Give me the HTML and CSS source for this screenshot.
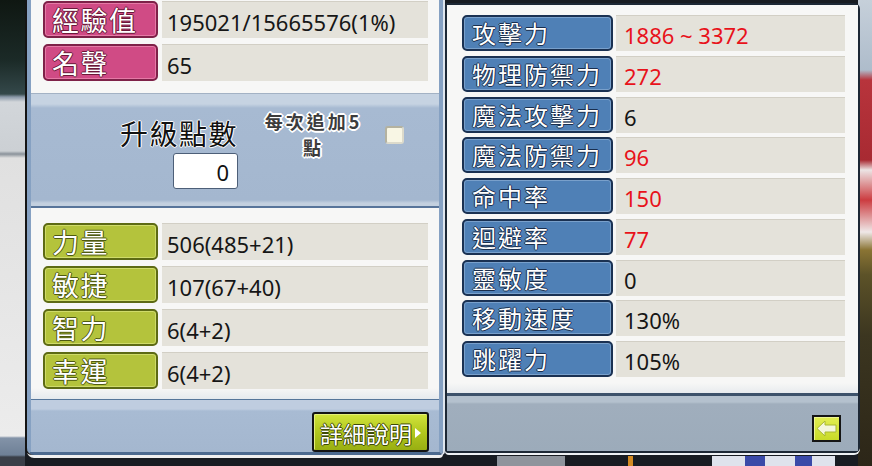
FILE: index.html
```html
<!DOCTYPE html>
<html lang="zh-Hant">
<head>
    <meta charset="UTF-8" />
    <title>角色能力值</title>
    <link rel="stylesheet" href="styles.css">
</head>
<body>
<!-- 能力值視窗 -->
<div class="window">

    <!-- 左側：基本能力 -->
    <section class="panel panel-left">
        <div class="sheet sheet-top">
            <div class="row"><div class="tag tag-pink">經驗值</div><div class="val">195021/15665576(1%)</div></div>
            <div class="row"><div class="tag tag-pink">名聲</div><div class="val">65</div></div>
        </div>

        <div class="ap-bar">
            <div class="ap-box">
                <div class="ap-title">升級點數</div>
                <div class="ap-input">0</div>
            </div>
            <div class="ap-auto">
                <div class="ap-line">每次追加5</div>
                <div class="ap-line">點</div>
            </div>
            <div class="check"></div>
        </div>

        <div class="sheet sheet-stats">
            <div class="row"><div class="tag tag-green">力量</div><div class="val">506(485+21)</div></div>
            <div class="row"><div class="tag tag-green">敏捷</div><div class="val">107(67+40)</div></div>
            <div class="row"><div class="tag tag-green">智力</div><div class="val">6(4+2)</div></div>
            <div class="row"><div class="tag tag-green">幸運</div><div class="val">6(4+2)</div></div>
        </div>

        <div class="foot">
            <button class="detail-btn">詳細說明<span class="tri"></span></button>
        </div>
    </section>

    <!-- 右側：詳細能力 -->
    <section class="panel panel-right">
        <div class="sheet sheet-detail">
            <div class="row"><div class="tag tag-blue">攻擊力</div><div class="val red">1886 ~ 3372</div></div>
            <div class="row"><div class="tag tag-blue">物理防禦力</div><div class="val red">272</div></div>
            <div class="row"><div class="tag tag-blue">魔法攻擊力</div><div class="val">6</div></div>
            <div class="row"><div class="tag tag-blue">魔法防禦力</div><div class="val red">96</div></div>
            <div class="row"><div class="tag tag-blue">命中率</div><div class="val red">150</div></div>
            <div class="row"><div class="tag tag-blue">迴避率</div><div class="val red">77</div></div>
            <div class="row"><div class="tag tag-blue">靈敏度</div><div class="val">0</div></div>
            <div class="row"><div class="tag tag-blue">移動速度</div><div class="val">130%</div></div>
            <div class="row"><div class="tag tag-blue">跳躍力</div><div class="val">105%</div></div>
        </div>
        <div class="foot foot-gray">
            <button class="back-btn">
                <svg width="25" height="23" viewBox="0 0 25 23">
                    <path d="M3 11.5 L11 4 L11 8 L22 8 L22 15 L11 15 L11 19 Z" fill="#f3f6da" stroke="#a9b832" stroke-width="1"/>
                </svg>
            </button>
        </div>
    </section>

</div>
</body>
</html>
```

FILE: styles.css
```css
* {
    margin: 0;
    padding: 0;
    box-sizing: border-box;
}

html, body {
    width: 100%;
    height: 100%;
    overflow: hidden;
}

body {
    font-family: "Noto Sans", "Noto Sans CJK TC", sans-serif;
    background-color: #181c22;
    background-image:
        linear-gradient(to right, transparent 0 497px, #8e949c 497px 565px, transparent 565px 628px, #d38a22 628px 633px, transparent 633px 712px, #dfe3ec 712px 745px, #3a4aa8 745px 765px, #dfe3ec 765px 795px, #3a4aa8 795px 812px, #dfe3ec 812px 835px, transparent 835px),
        linear-gradient(#0f1712 0, #1b2a27 60px, #34484a 94px, #8a98a8 97px, #d2d6da 102px, #ccd0d4 151px, #8a929a 154px, #e0e0e0 158px, #ececec 436px, #8393a8 438px, #6e8096 455px, #3a3f48 457px),
        linear-gradient(#c6d0da 0, #aebccb 70px, #b8343c 80px, #a82a32 160px, #ece4e4 170px, #cc3c40 200px, #efe8e8 232px, #8a7434 250px, #5c5228 275px, #3c3620 335px, #2c2618 466px);
    background-size: 100% 10px, 25px 100%, 14px 100%;
    background-position: left bottom, left top, right top;
    background-repeat: no-repeat;
}

.window {
    display: flex;
    align-items: flex-start;
    padding-left: 27px;
}

/* 面板 */
.panel {
    display: flex;
    flex-direction: column;
}

.panel-left {
    width: 416px;
    height: 455px;
    border: 4px solid #86a1c2;
    border-top: none;
    border-bottom: 3px solid #4c6a8f;
    border-radius: 0 0 4px 7px;
    box-shadow: -2px 0 0 #141414, 2px 0 0 #dfe6ee, 0 3px 0 #f0f0f0;
}

.panel-right {
    width: 415px;
    height: 450px;
    margin-top: 3px;
    margin-left: 2px;
    border: 2px solid #1d2835;
    border-radius: 3px 6px 6px 4px;
    box-shadow: 0 2px 0 #eef1f4;
}

.sheet {
    display: flex;
    flex-direction: column;
    gap: 6px;
    background: #f7f7f6;
}

.sheet-top {
    height: 93px;
    padding: 1px 11px 0 12px;
}

.sheet-stats {
    height: 191px;
    padding: 15px 11px 0 12px;
    background: linear-gradient(#f7f7f6 0, #f7f7f6 180px, #e6eaee 191px);
}

.sheet-detail {
    height: 388px;
    padding: 10px 13px 0 15px;
    gap: 4.75px;
    background: linear-gradient(#f7f7f6 0, #f7f7f6 378px, #e8ebee 388px);
}

/* 能力列 */
.row {
    display: flex;
    gap: 4px;
    height: 37px;
    flex-shrink: 0;
}

.tag {
    width: 115px;
    flex-shrink: 0;
    display: flex;
    align-items: center;
    padding-left: 7px;
    border: 2px solid;
    border-radius: 5px;
    font-family: "Noto Sans CJK TC", sans-serif;
    font-size: 27px;
    letter-spacing: 1.5px;
    line-height: 1;
    color: #fff;
}

.tag-pink {
    background: #d04b85;
    border-color: #7e2148;
    box-shadow: inset 0 0 0 1px #e57aa6;
    text-shadow: 1px 0 0 #6a1838, -1px 0 0 #6a1838, 0 1px 0 #6a1838, 0 -1px 0 #6a1838;
}

.tag-green {
    background: #b4c33c;
    border-color: #5d6a14;
    box-shadow: inset 0 0 0 1px #cfdb6a;
    text-shadow: 1px 0 0 #4e5a10, -1px 0 0 #4e5a10, 0 1px 0 #4e5a10, 0 -1px 0 #4e5a10;
}

.tag-blue {
    width: 151px;
    padding-left: 8px;
    background: #4f80b6;
    border-color: #1a3152;
    box-shadow: inset 0 0 0 1px #79a0cb;
    font-size: 24px;
    letter-spacing: 2px;
    text-shadow: 1px 0 0 #1a2f4e, -1px 0 0 #1a2f4e, 0 1px 0 #1a2f4e, 0 -1px 0 #1a2f4e;
}

.sheet-detail .row {
    height: 36px;
    gap: 3px;
}

.val {
    flex: 1;
    display: flex;
    align-items: center;
    padding: 3px 0 0 5px;
    background: #e4e2da;
    border-top: 1px solid #d2cfc5;
    font-size: 22px;
    color: #161616;
}

.sheet-detail .val {
    padding-left: 8px;
}

.val.red {
    color: #e8121b;
}

/* 升級點數 */
.ap-bar {
    height: 115px;
    display: flex;
    align-items: flex-start;
    padding-left: 89px;
    border-top: 1px solid #a3b2c4;
    border-bottom: 2px solid #58759a;
    background: linear-gradient(#c6d3e2 0, #c6d3e2 10px, #a7bad2 14px, #a4b7cf 106px, #c3d0df 109px, #c3d0df 112px);
}

.ap-box {
    display: flex;
    flex-direction: column;
    align-items: flex-end;
    margin-top: 25px;
}

.ap-title {
    font-family: "Noto Sans CJK TC", sans-serif;
    font-size: 28px;
    line-height: 28px;
    letter-spacing: 1.5px;
    color: #111;
    text-shadow: 1px 0 0 #fff, -1px 0 0 #fff, 0 1px 0 #fff, 0 -1px 0 #fff;
}

.ap-input {
    width: 65px;
    height: 36px;
    margin-top: 6px;
    padding: 2px 8px 0 0;
    background: #fff;
    border: 1px solid #4d5f78;
    border-radius: 3px;
    font-size: 22px;
    line-height: 32px;
    text-align: right;
    color: #111;
}

.ap-auto {
    margin: 14px 0 0 25px;
    width: 101px;
    display: flex;
    flex-direction: column;
    align-items: center;
    font-family: "Noto Sans CJK TC", sans-serif;
    font-weight: bold;
    font-size: 18px;
    letter-spacing: 3px;
    color: #3c3c3c;
    text-shadow: 2px 0 0 #fff, -2px 0 0 #fff, 0 2px 0 #fff, 0 -2px 0 #fff, 1px 1px 0 #fff, -1px -1px 0 #fff, 1px -1px 0 #fff, -1px 1px 0 #fff;
}

.ap-line {
    line-height: 26px;
}

.check {
    width: 19px;
    height: 18px;
    margin: 32px 0 0 21px;
    background: #f8f6e4;
    border: 2px solid #b4b2a0;
    border-right-color: #dcdacb;
    border-bottom-color: #dcdacb;
    border-radius: 3px;
}

/* 底部按鈕列 */
.foot {
    flex: 1;
    display: flex;
    justify-content: flex-end;
    align-items: flex-start;
    padding: 12px 10px 0 0;
    border-top: 1px solid #56769a;
    background: linear-gradient(#bfcde0 0, #bfcde0 9px, #a8bbd3 11px, #a4b7cf 100%);
}

.foot-gray {
    padding: 19px 17px 0 0;
    border-top: 3px solid #3d526b;
    background: linear-gradient(#b4c1ce 0, #b4c1ce 6px, #a0aebd 8px, #9cabba 100%);
}

.detail-btn {
    width: 117px;
    height: 40px;
    display: flex;
    align-items: center;
    gap: 3px;
    padding: 2px 0 0 6px;
    border: 2px solid #141414;
    border-radius: 3px;
    background: linear-gradient(#d2e43c, #b2c81e 50%, #98ae12);
    box-shadow: inset 1px 1px 0 #e4f07a;
    font-family: "Noto Sans CJK TC", sans-serif;
    font-size: 23px;
    line-height: 1;
    color: #fff;
    text-shadow: 1px 0 0 #3e4a06, -1px 0 0 #3e4a06, 0 1px 0 #3e4a06, 0 -1px 0 #3e4a06;
    cursor: pointer;
}

.tri {
    width: 0;
    height: 0;
    border-top: 5px solid transparent;
    border-bottom: 5px solid transparent;
    border-left: 6px solid #fff;
}

.back-btn {
    width: 29px;
    height: 27px;
    padding: 0;
    display: flex;
    align-items: center;
    justify-content: center;
    border: 2px solid #151515;
    background: linear-gradient(#e2ee52, #c8da28);
    box-shadow: inset 1px 1px 0 #eef692;
    cursor: pointer;
}

.back-btn svg {
    flex-shrink: 0;
    display: block;
}
```
